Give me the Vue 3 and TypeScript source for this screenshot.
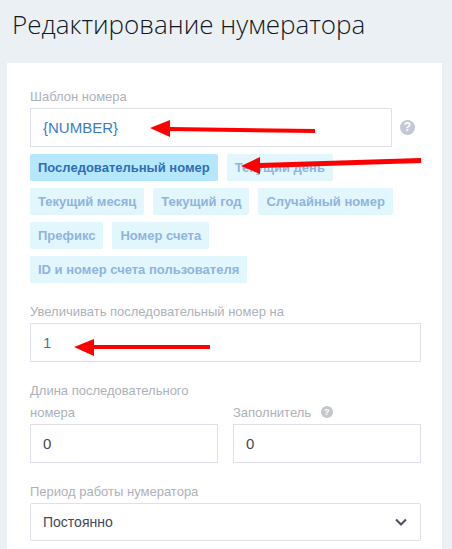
<template>
  <div class="page">
    <h1 class="title">Редактирование нумератора</h1>
    <div class="card">
      <label class="label first">Шаблон номера</label>
      <div class="template-row">
        <div class="input blue">{NUMBER}</div>
        <span class="help big">?</span>
      </div>
      <div class="chips">
        <span
          v-for="(chip, i) in chips"
          :key="chip"
          class="chip"
          :class="{ active: i === 0 }"
        >{{ chip }}</span>
      </div>

      <label class="label step">Увеличивать последовательный номер на</label>
      <div class="input teal">1</div>

      <div class="columns">
        <div class="col">
          <label class="label">Длина последовательного номера</label>
          <div class="input dark">0</div>
        </div>
        <div class="col">
          <label class="label">Заполнитель <span class="help small">?</span></label>
          <div class="input dark">0</div>
        </div>
      </div>

      <label class="label period">Период работы нумератора</label>
      <div class="select">
        <span class="select-value">Постоянно</span>
        <svg width="14" height="10" viewBox="0 0 14 10">
          <path d="M2 2.500 L7 7.500 L12 2.500" fill="none" stroke="#4d5666" stroke-width="2.2" />
        </svg>
      </div>
    </div>

    <!-- красные стрелки поверх скриншота -->
    <svg class="arrows" width="452" height="549" viewBox="0 0 452 549">
      <g fill="#fe0000" stroke="none">
        <path d="M150 128 L170 120 L170 127 L315 129 L315 133 L170 131 L170 137 Z" />
        <path d="M241 166 L260 157 L260 163 L421 158 L421 163 L260 168 L260 174 Z" />
        <path d="M74 347 L94 339 L94 345 L210 345 L210 349 L94 349 L94 356 Z" />
      </g>
    </svg>
  </div>
</template>

<script setup lang="ts">
const chips: string[] = [
  'Последовательный номер',
  'Текущий день',
  'Текущий месяц',
  'Текущий год',
  'Случайный номер',
  'Префикс',
  'Номер счета',
  'ID и номер счета пользователя',
];
</script>

<style>
html,
body {
  margin: 0;
  background: #ebf0f5;
}
</style>

<style scoped>
.page {
  position: relative;
  width: 452px;
  height: 549px;
  overflow: hidden;
  background: #ebf0f5;
  font-family: "Liberation Sans", Arial, sans-serif;
}
.title {
  margin: 0;
  padding: 6px 0 0 12px;
  height: 63px;
  box-sizing: border-box;
  font-family: "Open Sans", sans-serif;
  font-weight: 300;
  font-size: 26px;
  line-height: 36px;
  color: #111a24;
  white-space: nowrap;
}
.card {
  width: 435px;
  margin-left: 7px;
  height: 486px;
  box-sizing: border-box;
  padding: 0 21px 0 23px;
  background: #fff;
}
.label {
  display: block;
  font-size: 13px;
  line-height: 22px;
  color: #adb1b9;
}
.first {
  padding-top: 23px;
  line-height: 21px;
}
.template-row {
  display: flex;
  align-items: center;
  gap: 8px;
  margin-top: 1px;
}
.template-row .input {
  width: 362px;
  flex: none;
}
.input {
  height: 39px;
  box-sizing: border-box;
  border: 1px solid #dfe0ea;
  padding: 0 12px;
  font-size: 15px;
  line-height: 38px;
}
.blue {
  color: #3a7bc8;
}
.teal {
  color: #2f7da8;
}
.dark {
  color: #3f4a5a;
}
.help {
  display: inline-block;
  border-radius: 50%;
  color: #fff;
  text-align: center;
  font-weight: 700;
}
.help.big {
  width: 15px;
  height: 15px;
  background: #c3c8d6;
  font-size: 12px;
  line-height: 15px;
}
.help.small {
  width: 12px;
  height: 12px;
  margin-left: 6px;
  background: #c4c6ca;
  font-size: 9px;
  line-height: 12px;
  vertical-align: 2px;
}
.chips {
  display: flex;
  flex-wrap: wrap;
  gap: 7px 9px;
  margin-top: 7px;
}
.chip {
  height: 27px;
  padding: 0 8px;
  border-radius: 2px;
  background: #e2f6fe;
  color: #8fb4dd;
  font-size: 13px;
  font-weight: 700;
  line-height: 27px;
  white-space: nowrap;
}
.chip.active {
  background: #b5e8fc;
  color: #2f6eb5;
}
.step {
  margin-top: 18px;
  line-height: 21px;
  margin-bottom: 1px;
}
.columns {
  display: grid;
  grid-template-columns: 188px 188px;
  gap: 15px;
  margin-top: 18px;
}
.col {
  display: flex;
  flex-direction: column;
  justify-content: flex-end;
}
.period {
  margin-top: 18px;
  line-height: 21px;
  margin-bottom: 1px;
}
.select {
  display: flex;
  align-items: center;
  justify-content: space-between;
  height: 38px;
  box-sizing: border-box;
  padding: 0 12px;
  border: 1px solid #dfe0ea;
  border-radius: 2px;
  font-size: 14px;
  color: #3f4a5a;
}
.select-value {
  margin-bottom: 1px;
}
.arrows {
  position: absolute;
  left: 0;
  top: 0;
  pointer-events: none;
}
</style>
